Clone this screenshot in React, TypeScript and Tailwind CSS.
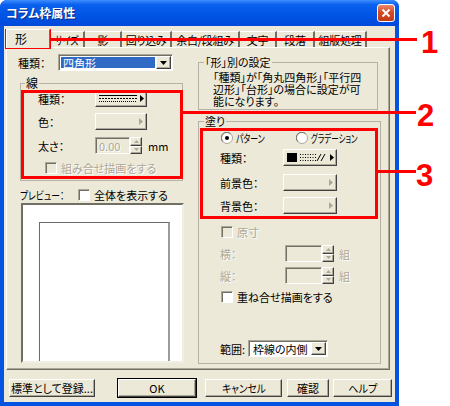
import React from 'react';

const jp = "font-['Noto_Sans_CJK_JP','Noto_Sans',sans-serif] [font-feature-settings:'palt']";

// classic 3D edges
const raised =
  'bg-[#ECE9D8] border border-t-white border-l-white border-r-[#404040] border-b-[#404040] shadow-[inset_-1px_-1px_0_#ACA899]';
const sunken =
  'border border-t-[#ACA899] border-l-[#ACA899] border-r-white border-b-white shadow-[inset_1px_1px_0_#716F64]';
const grayText = 'text-[#ACA899] [text-shadow:1px_1px_0_#ffffff]';

function RightArrow({ disabled }: { disabled?: boolean }) {
  return (
    <svg width="4" height="7" viewBox="0 0 4 7" className="shrink-0">
      <path d="M0 0L4 3.5L0 7Z" fill={disabled ? '#ACA899' : '#000'} />
    </svg>
  );
}

function DownArrow() {
  return (
    <svg width="7" height="4" viewBox="0 0 7 4">
      <path d="M0 0H7L3.5 4Z" fill="#000" />
    </svg>
  );
}

function PickButton({ width, disabled, children }: { width: string; disabled?: boolean; children?: React.ReactNode }) {
  return (
    <div className={`${raised} ${width} flex h-[17px] items-center gap-[3px] pl-[3px] pr-[3px]`}>
      <div className="flex flex-1 items-center">{children}</div>
      <RightArrow disabled={disabled} />
    </div>
  );
}

function Checkbox({ disabled }: { disabled?: boolean }) {
  return (
    <div
      className={`${sunken} h-[12px] w-[12px] shrink-0 ${disabled ? 'bg-[#ECE9D8]' : 'bg-white'}`}
    />
  );
}

function Radio({ checked }: { checked?: boolean }) {
  return (
    <svg width="12" height="12" viewBox="0 0 12 12" className="shrink-0">
      <circle cx="6" cy="6" r="5.5" fill="#fff" stroke="#ACA899" />
      <path d="M1.8 9.5A5 5 0 0 1 9.5 1.8" fill="none" stroke="#716F64" />
      {checked && <circle cx="6" cy="6" r="2" fill="#000" />}
    </svg>
  );
}

function Spin({ width, value }: { width: string; value?: string }) {
  return (
    <div className="flex h-[17px] items-stretch">
      <div className={`${sunken} ${width} flex items-center bg-[#ECE9D8] pl-[3px] ${grayText}`}>{value}</div>
      <div className="flex w-[12px] flex-col">
        <div className={`${raised} flex flex-1 items-center justify-center`}>
          <svg width="5" height="3" viewBox="0 0 5 3">
            <path d="M0 3H5L2.5 0Z" fill="#ACA899" />
          </svg>
        </div>
        <div className={`${raised} flex flex-1 items-center justify-center`}>
          <svg width="5" height="3" viewBox="0 0 5 3">
            <path d="M0 0H5L2.5 3Z" fill="#ACA899" />
          </svg>
        </div>
      </div>
    </div>
  );
}

function Combo({ width, text, selected }: { width: string; text: string; selected?: boolean }) {
  return (
    <div className={`${sunken} ${width} flex h-[17px] items-stretch bg-white p-[1px]`}>
      <div
        className={`m-[1px] flex flex-1 items-center pl-[2px] ${selected ? 'bg-[#316AC5] text-white' : ''}`}
      >
        {text}
      </div>
      <div className={`${raised} flex w-[15px] items-center justify-center`}>
        <DownArrow />
      </div>
    </div>
  );
}

// katakana labels are set narrower, like the system UI font
const tabs = [
  { label: 'サイズ', w: 'w-[35px]', narrow: 'inline-block scale-x-[0.82]' },
  { label: '影', w: 'w-[37px]', narrow: '' },
  { label: '回り込み', w: 'w-[50px]', narrow: '' },
  { label: '余白/段組み', w: 'w-[68px]', narrow: '' },
  { label: '文字', w: 'w-[37px]', narrow: '' },
  { label: '段落', w: 'w-[38px]', narrow: '' },
  { label: '組版処理', w: 'w-[52px]', narrow: '' },
];

const bottomButtons = [
  { label: '標準として登録...', w: 'w-[86px]', ml: 'ml-[5px]', narrow: '' },
  { label: 'OK', w: 'w-[78px]', ml: 'ml-[23px]', narrow: '' },
  { label: 'キャンセル', w: 'w-[77px]', ml: 'ml-[9px]', narrow: 'inline-block scale-x-[0.88]' },
  { label: '確認', w: 'w-[42px]', ml: 'ml-[5px]', narrow: '' },
  { label: 'ヘルプ', w: 'w-[59px]', ml: 'ml-[4px]', narrow: 'inline-block scale-x-[0.92]' },
];

export default function App() {
  return (
    <div
      className={`relative flex h-[406px] w-[450px] overflow-hidden bg-white ${jp} text-[11px] leading-[12px] text-black`}
    >
      {/* window frame */}
      <div className="flex h-[406px] w-[399px] shrink-0 flex-col overflow-hidden rounded-t-[7px] bg-[#0553E1]">
        <div className="flex h-[26px] shrink-0 items-center bg-[linear-gradient(to_bottom,#3d8eff_0%,#0a61ee_18%,#0055e5_55%,#0049db_100%)] pl-[6px] pr-[3px]">
          <span className="text-[12px] font-bold text-white [text-shadow:1px_1px_0_#0b2a86]">
            コラム枠属性
          </span>
          <div className="ml-auto mr-[1px] flex h-[18px] w-[18px] items-center justify-center rounded-[3px] border border-white bg-[linear-gradient(to_bottom,#e9896c,#d64b26_45%,#c23a17)]">
            <svg width="10" height="10" viewBox="0 0 10 10">
              <path d="M1.5 1.5L8.5 8.5M8.5 1.5L1.5 8.5" stroke="#fff" strokeWidth="2" />
            </svg>
          </div>
        </div>

        <div className="mx-[4px] mb-[4px] flex flex-1 flex-col bg-[#ECE9D8]">
          {/* tab strip */}
          <div className="ml-[2px] mt-[3px] flex h-[18px] items-end">
            <div className="relative z-10 -mb-px flex h-[19px] w-[44px] items-center border-l border-t border-r border-l-white border-t-white border-r-[#716F64] bg-[#ECE9D8] pl-[8px] text-[12px]">
              形
            </div>
            {tabs.map((t) => (
              <div
                key={t.label}
                className={`${t.w} flex h-[16px] items-center justify-center border-t border-r-2 border-t-white border-r-[#716F64] tracking-[-0.3px]`}
              >
                <span className={t.narrow}>{t.label}</span>
              </div>
            ))}
          </div>

          {/* tab page */}
          <div className="ml-[2px] flex h-[323px] w-[384px] border border-b-[#716F64] border-l-white border-r-[#716F64] border-t-white shadow-[inset_-1px_-1px_0_#ACA899]">
            {/* left column */}
            <div className="flex w-[191px] flex-col">
              <div className="mt-[6px] flex h-[17px] items-center">
                <span className="ml-[11px] w-[40px]">種類：</span>
                <Combo width="w-[115px]" text="四角形" selected />
              </div>

              <fieldset className="ml-[13px] mt-[6px] h-[104px] w-[163px] border border-[#B5B2A5]">
                <legend className="ml-[4px] px-[1px] text-[12px] leading-[12px]">線</legend>
                <div className="mt-[1px] flex h-[17px] items-center">
                  <span className="ml-[17px] w-[57px]">種類：</span>
                  <PickButton width="w-[52px]">
                    <svg width="38" height="9" viewBox="0 0 38 9">
                      <path d="M0 1.5H38" stroke="#000" strokeWidth="1" />
                      <path d="M0 4.5H38" stroke="#000" strokeWidth="1" strokeDasharray="2 1" />
                      <path d="M0 7.5H38" stroke="#000" strokeWidth="1" strokeDasharray="1 1" />
                    </svg>
                  </PickButton>
                </div>
                <div className="mt-[6px] flex h-[17px] items-center">
                  <span className="ml-[17px] w-[57px]">色：</span>
                  <PickButton width="w-[52px]" disabled />
                </div>
                <div className="mt-[7px] flex h-[17px] items-center">
                  <span className="ml-[17px] w-[57px]">太さ：</span>
                  <Spin width="w-[35px]" value="0.00" />
                  <span className="ml-[6px]">mm</span>
                </div>
                <div className="mt-[8px] flex h-[12px] items-center">
                  <div className="ml-[24px]">
                    <Checkbox disabled />
                  </div>
                  <span className={`ml-[4px] ${grayText}`}>組み合せ描画をする</span>
                </div>
              </fieldset>

              <div className="mt-[7px] flex h-[13px] items-center">
                <span className="ml-[13px] w-[58px] whitespace-nowrap">
                  <span className="inline-block origin-left scale-x-[0.8]">プレビュー：</span>
                </span>
                <Checkbox />
                <span className="ml-[4px]">全体を表示する</span>
              </div>

              {/* preview */}
              <div className="ml-[14px] mt-[2px] flex h-[160px] w-[163px] flex-col border-2 border-b-[#F1EFE2] border-l-[#716F64] border-r-[#F1EFE2] border-t-[#716F64] bg-white pl-[16px] pt-[17px]">
                <div className="w-[131px] flex-1 border-l border-r-2 border-t border-l-[#6b6b6b] border-r-[#9c9c9c] border-t-[#6b6b6b]" />
              </div>
            </div>

            {/* right column */}
            <div className="flex w-[180px] flex-col">
              <fieldset className="mt-[8px] h-[54px] border border-[#B5B2A5]">
                <legend className="ml-[5px] px-[1px]">「形」別の設定</legend>
                <p className="whitespace-nowrap pl-[14px] pt-[3px]">
                  「種類」が「角丸四角形」「平行四
                  <br />
                  辺形」「台形」の場合に設定が可
                  <br />
                  能になります。
                </p>
              </fieldset>

              <fieldset className="mt-[5px] h-[249px] border border-[#B5B2A5]">
                <legend className="ml-[5px] px-[1px]">塗り</legend>
                <div className="flex h-[235px] flex-col">
                  <div className="mt-[5px] flex h-[12px] items-center whitespace-nowrap">
                    <div className="ml-[22px] flex w-[75px] items-center">
                      <Radio checked />
                      <span className="ml-[3px] inline-block origin-left scale-x-[0.72]">パターン</span>
                    </div>
                    <Radio />
                    <span className="ml-[3px] inline-block origin-left scale-x-[0.68]">グラデーション</span>
                  </div>
                  <div className="mt-[5px] flex h-[17px] items-center">
                    <span className="ml-[21px] w-[63px]">種類：</span>
                    <PickButton width="w-[54px]">
                      <svg width="40" height="9" viewBox="0 0 40 9">
                        <rect x="0" y="0" width="10" height="9" fill="#000" />
                        <path d="M13 1.5H29M13 4.5H29M13 7.5H29" stroke="#000" strokeDasharray="1 1.5" />
                        <path d="M30 8L34 1M34 8L38 1" stroke="#000" />
                      </svg>
                    </PickButton>
                  </div>
                  <div className="mt-[8px] flex h-[17px] items-center">
                    <span className="ml-[21px] w-[63px]">前景色：</span>
                    <PickButton width="w-[54px]" disabled />
                  </div>
                  <div className="mt-[6px] flex h-[17px] items-center">
                    <span className="ml-[21px] w-[63px]">背景色：</span>
                    <PickButton width="w-[54px]" disabled />
                  </div>
                  <div className="mt-[12px] flex h-[12px] items-center">
                    <div className="ml-[22px]">
                      <Checkbox disabled />
                    </div>
                    <span className={`ml-[4px] ${grayText}`}>原寸</span>
                  </div>
                  <div className="mt-[7px] flex h-[17px] items-center">
                    <span className={`ml-[21px] w-[65px] ${grayText}`}>横：</span>
                    <Spin width="w-[37px]" />
                    <span className={`ml-[5px] ${grayText}`}>組</span>
                  </div>
                  <div className="mt-[5px] flex h-[17px] items-center">
                    <span className={`ml-[21px] w-[65px] ${grayText}`}>縦：</span>
                    <Spin width="w-[37px]" />
                    <span className={`ml-[5px] ${grayText}`}>組</span>
                  </div>
                  <div className="mt-[7px] flex h-[12px] items-center">
                    <div className="ml-[22px]">
                      <Checkbox />
                    </div>
                    <span className="ml-[4px]">重ね合せ描画をする</span>
                  </div>
                  <div className="flex-1" />
                  <div className="mb-[5px] flex h-[17px] items-center">
                    <span className="ml-[21px] w-[28px]">範囲:</span>
                    <Combo width="w-[80px]" text="枠線の内側" />
                  </div>
                </div>
              </fieldset>
            </div>
          </div>

          {/* dialog buttons */}
          <div className="mt-[9px] flex h-[18px]">
            {bottomButtons.map((b) => (
              <div
                key={b.label}
                className={`${raised} ${b.w} ${b.ml} flex items-center justify-center whitespace-nowrap ${b.label === 'OK' ? 'outline outline-1 outline-[#000]' : ''}`}
              >
                <span className={b.narrow}>{b.label}</span>
              </div>
            ))}
          </div>
        </div>
      </div>

      {/* red callouts drawn over the dialog */}
      <div className="pointer-events-none absolute left-[5px] top-[29px] h-[20px] w-[46px] border-[3px] border-[#FF0000]" />
      <div className="pointer-events-none absolute left-[51px] top-[38px] h-[3px] w-[366px] bg-[#FF0000]" />
      <div className="pointer-events-none absolute left-[21px] top-[90px] h-[89px] w-[162px] border-[3px] border-[#FF0000]" />
      <div className="pointer-events-none absolute left-[183px] top-[111px] h-[3px] w-[233px] bg-[#FF0000]" />
      <div className="pointer-events-none absolute left-[200px] top-[128px] h-[91px] w-[178px] border-[3px] border-[#FF0000]" />
      <div className="pointer-events-none absolute left-[378px] top-[170px] h-[3px] w-[38px] bg-[#FF0000]" />
      {['1', '2', '3'].map((n, i) => (
        <span
          key={n}
          className={`pointer-events-none absolute font-['Liberation_Sans',sans-serif] text-[31px] font-bold leading-none text-[#FF0000] ${
            i === 0 ? 'left-[421px] top-[27px]' : i === 1 ? 'left-[417px] top-[100px]' : 'left-[416px] top-[160px]'
          }`}
        >
          {n}
        </span>
      ))}
    </div>
  );
}
